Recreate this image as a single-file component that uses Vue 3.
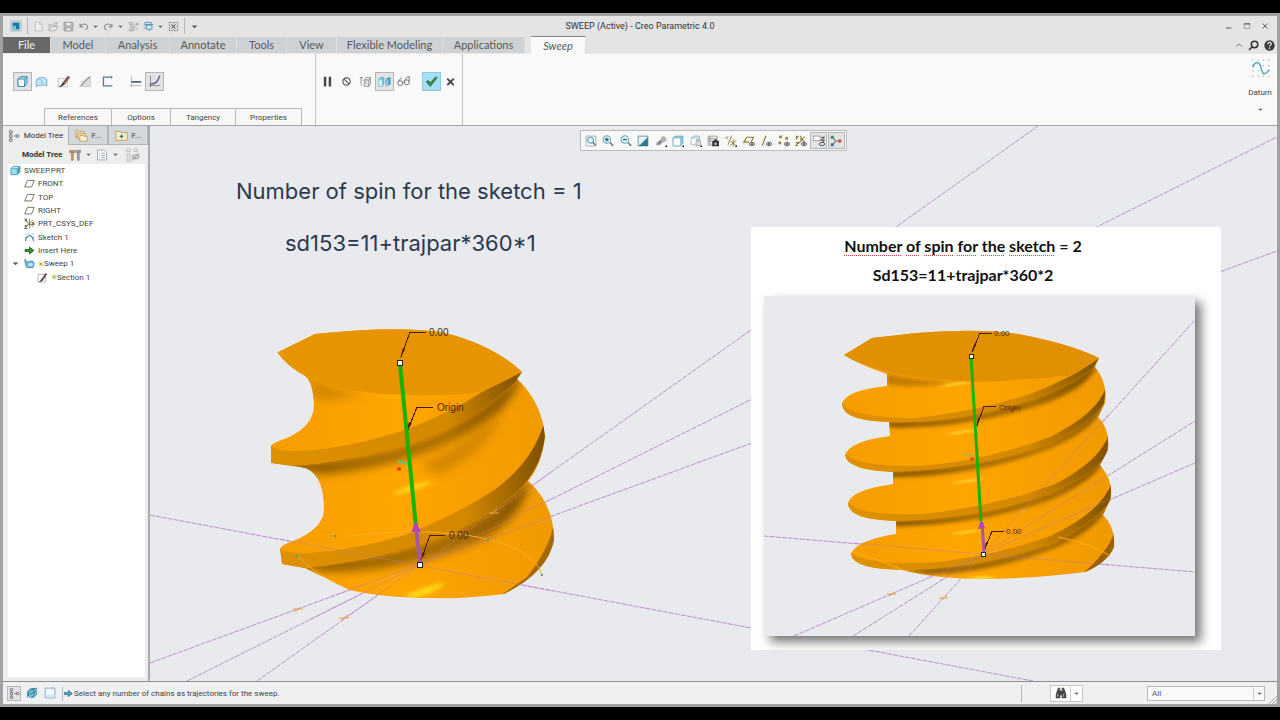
<script setup>
import { h } from 'vue'

const ink = '#5d6266'
const teal = '#2f7f9b'
const olive = '#8a7a35'

/* Each glyph is a list of [path, stroke, fill, strokeWidth] on a 16x16 grid. */
const glyphs = {
  app: [['M1.5 1.5h13v13h-13z', '#7fa6ba', '#d9e7ee'], ['M4 4h8v8H4z', '#0f6d95', '#1c7da6'], ['M4 8h4v4H4z', 'none', '#7cc4e2']],
  blank: [['M3.5 1.5h6l3.5 3.5v9.500h-9.500z', '#b5b5b5', '#efefef'], ['M9.500 1.500v3.500h3.500', '#b5b5b5', 'none']],
  open: [['M1.500 14V5h5l1 1.500H12V9', '#a5a5a5', '#d8d8d8'], ['M1.500 14l3-6h10l-3 6z', '#a5a5a5', '#e3e3e3'], ['M8 4c2-3 4-2 5 0M13 1v3.500h-3', '#a5a5a5', 'none']],
  save: [['M1.500 2h13v12.500h-13z', '#8f8f8f', '#bdbdbd'], ['M4 2h8v5H4z', '#999', '#eee'], ['M4.500 10h7v4.500h-7z', '#999', '#e8e8e8']],
  undo: [['M3 8c3-4.500 9-5 11 0 0 3-1.500 4-3 5M3 4v4.500h5', '#8c8c8c', 'none', 1.6]],
  redo: [['M13 8C10 3.500 4 3 2 8c0 3 1.500 4 3 5M13 4v4.500H8', '#8c8c8c', 'none', 1.6]],
  regen: [['M2 2h5v3H2zM4 7h6v3H4zM2 12h6v2.500H2z', '#a2a2a2', '#d6d6d6'], ['M10 5c3-4 5-1 4 1M15 3l-1 3-3-1M14 10c-1 3-3 3-4 1', '#999', 'none']],
  windows: [['M3 2h9v3H3zM5 6h8v6H5z', teal, '#d6edf7'], ['M1 6h3M1 10h3M12 5h3M9 12v3', teal, 'none']],
  closebox: [['M2 2h5l1 2 1-2h5v5l-2 1 2 1v5H9l-1-2-1 2H2V9l2-1-2-1z', '#777', '#eee'], ['M5 5l6 6M11 5l-6 6', '#555', 'none', 1.5]],
  down: [['M3 6h10l-5 5z', 'none', '#555']],
  min: [['M2 12h11', '#555', 'none', 2]],
  max: [['M2.500 3h11v10h-11z', '#666', 'none'], ['M2 4h12', '#555', 'none', 2]],
  close: [['M3 3l10 10M13 3L3 13', '#555', 'none', 1.8]],
  up: [['M2 11l6-5 6 5', '#888', 'none', 2]],
  search: [['M9.500 1.800a4.700 4.700 0 1 1 0 9.400 4.700 4.700 0 0 1 0-9.400zM6 10l-4.500 4.500', '#333', 'none', 2.2]],
  help: [['M8 .5a7.500 7.500 0 1 1 0 15 7.500 7.500 0 0 1 0-15z', 'none', '#3b3b3b'], ['M5.500 6c0-3.500 5.500-3 5 0-.3 1.500-2.500 1.500-2.500 3.500M8 11v2', '#fff', 'none', 1.7]],
  solid: [['M2.500 5l3-3h8v8.500l-3 3.500h-8z', teal, '#9ed7ef'], ['M2.500 5h8v9h-8z', teal, '#fff'], ['M10.500 5l3-3', teal, 'none']],
  surface: [['M1.500 6c4-4 9-4 13-1v8.500c-4-2-9-1-13 .5z', '#6aa6bd', '#bfe4f3'], ['M1.500 6c4-2 6-1 7 1M8.500 7v5', '#8abdd0', 'none']],
  sketch: [['M1.500 4.500h11v10h-11z', '#b5b5b5', '#fff'], ['M7 10l6.500-8.500 2 1.500L9 11.500z', '#6b3c36', '#9a6560'], ['M7 10l2 1.500-4 2.500H3l2-1z', '#222', '#333', .6]],
  thin: [['M3 14V9l8-6h3v11z', '#c2c2c2', '#ddd'], ['M1.500 14L14 1.500', '#6f6f6f', 'none', 1.2]],
  shell: [['M14 2.500H3v11h11', '#4c7e92', 'none', 1.6], ['M13 1.500v3', '#4c7e92', 'none']],
  constant: [['M3 1v14M1 13h14', '#aaa', 'none'], ['M3 8.500h12', '#234d60', 'none', 1.8]],
  variable: [['M3 1v14M1 13h14', '#7b7b86', 'none'], ['M3 11c6 0 9-2 11.500-10', '#76549c', 'none', 1.8]],
  pause: [['M3.500 2h3v12h-3zM9.500 2h3v12h-3z', 'none', '#444']],
  none: [['M8 3.500a4.500 4.500 0 1 1 0 9 4.500 4.500 0 0 1 0-9zM5 5l6 6', '#555', 'none', 1.4]],
  wire: [['M1 3h4M2.500 3v9M7 6l2-3h5v8l-2 3H7zM7 6h5v8M12 6l2-3', '#888', 'none', 1.1], ['M4 14L14 3M4 6l9 7', '#aaa', 'none']],
  preview: [['M1 6l2-3h4v8l-2 3H1z', '#3b9dbc', '#6ccae8', .7], ['M1 6h4v8H1z', '#8cc', '#e7f8ff', .7], ['M9 5l6-2v8l-5 3z', '#3583a8', '#4aaad0', .7], ['M9 5l2 1v8', '#fff', 'none']],
  glasses: [['M4 7a3 3 0 1 1 0 6 3 3 0 0 1 0-6zM12 6a3 3 0 1 1 0 6 3 3 0 0 1 0-6zM1.500 8l4-5M9 7l4-5h2v6M7 9h2', '#666', 'none', 1.1]],
  check: [['M1.500 8.500L4 6.500l2.500 3L13.500 2 15 3.500 6.500 14z', '#2a6f35', '#3e8c46']],
  cross: [['M4 4.500l8 8M12 4.500l-8 8', '#444', 'none', 2.4]],
  datum: [['M1 1h1M6 1h1M10 1h1M14.500 1h1M1 5.500h1M10 5.500h1M14.500 5.500h1M1 10h1M6 10h1M1 14.500h1M6 14.500h1M10 14.500h1M14.500 14.500h1', '#888', 'none', .7], ['M1.500 7C3 3 6.500 1 8 6s2 10 7.500 3', '#3e9dbf', 'none', 1.1]],
  tree: [['M2 1h3.500v3H2zM2 6.500h3.500v3H2zM2 12h3.500v3H2zM11 6.500h3.500v3H11z', ink, '#fff', 1.1], ['M8 8h3M3.700 4v2.500M3.700 9.500V12', ink, 'none', 1.1]],
  folders: [['M1 2h4l1 1h5v7H1z', '#bd9854', '#f5dfb0'], ['M3 5h4l1 1h5v6H3z', '#bd9854', '#f5dfb0'], ['M6 8h4l1 1h4v6H6z', '#bd9854', '#fdf2d7']],
  favfolder: [['M1 3h6l1 1.500h7V14H1z', '#bd9854', '#f9edca'], ['M8 6l1 2.200 2 .3-2 1.200-1 2.300-1-2.300-2-1.200 2-.3z', 'none', '#166b6e']],
  tools: [['M1 2h7v3H1z', '#9a7a55', '#b99a70'], ['M3.500 5h2v10h-2z', '#a07b4e', '#d6a15d'], ['M10 1v4l1.500 1v9h2V6L15 5V1M10 4h5', '#777', '#aaa']],
  list: [['M2 1.500h9l3 3v10H2z', '#8c979d', '#fff'], ['M4 5.500h1M7 5.500h5M4 8.500h1M7 8.500h5M4 11.500h1M7 11.500h5', '#7b8a91', 'none']],
  hidetree: [['M1 1h4v3H1zM1 6.500h4v3H1zM1 12h4v3H1zM9 1h4v3H9z', '#bbb', '#eee'], ['M7 10c2-3 6-3 8 0-2 3-6 3-8 0zM7 14l8-8M11 9v2', '#999', 'none', 1.2]],
  part: [['M1.500 5l4-3h9v8l-4 4h-9z', '#327f98', '#45a8c6'], ['M1.500 5h9v9h-9z', '#54a2b8', '#9bdced'], ['M1.500 5l4-3h9l-4 3z', '#54a2b8', '#c8f1fa']],
  plane: [['M5 3.500h10l-4 9.500H1z', '#80735f', '#fff', 1.4]],
  csys: [['M8 1v14M2 4l12 9M3 13L13 3M5 9h10', '#8a7540', 'none', 1.2], ['M1 1l3 4M4 1L2 5M12 6l3 4M15 6l-3 4M1 11h3l-3 4h4', '#3e3830', 'none', 1.3]],
  arc: [['M2 13C4 3 12 3 14 13', '#287b9d', 'none', 1.7], ['M1 3h3M6 3h3M12 3h3M1 8h2M13 8h2', '#79a7b8', 'none']],
  insert: [['M1.500 6.500H8V3l6.500 5L8 13V9.500H1.500z', '#173e14', '#299a25']],
  sweep: [['M1 2l2 1v3l5-1 4-1 3 4-2 6H4L2 9z', '#32829f', '#70c2df'], ['M5 7l7-1 2 3-2 4H6z', '#4795b1', '#b8eafa']],
  section: [['M1.500 3.500h11v11h-11z', '#999', '#fff'], ['M7 10l5.500-8 2 1L9 11z', '#5b3834', '#7b4a43', .8], ['M7 10l2 1.500-4 2.500H3.500l1.500-1z', '#222', '#333', .6]],
  spark: [['M8 1v14M1 8h14M3 3l10 10M13 3L3 13', '#a6b51e', 'none', 1.8]],
  refit: [['M1.500 1.500h13v13h-13z', '#8b9aa2', '#fff'], ['M7.500 3a4 4 0 1 1 0 8 4 4 0 0 1 0-8z', '#5aa0b5', '#e1f3f7', 1.4], ['M10.500 10l4 4', '#6f7678', 'none', 2]],
  zoomin: [['M6.500 1a5 5 0 1 1 0 10 5 5 0 0 1 0-10z', '#65a6b9', '#e5f4f8', 1.4], ['M6.500 3.500v5M4 6h5', '#20637a', 'none', 1.8], ['M10.500 10l4.500 4.500', '#6f7678', 'none', 2]],
  zoomout: [['M6.500 1a5 5 0 1 1 0 10 5 5 0 0 1 0-10z', '#65a6b9', '#e5f4f8', 1.4], ['M4 6h5', '#20637a', 'none', 1.8], ['M10.500 10l4.500 4.500', '#6f7678', 'none', 2]],
  repaint: [['M1.500 1.500h13v13h-13z', '#407c91', '#e5f6fb'], ['M14.500 3v11.500H2z', 'none', '#2b7891'], ['M3 13L12 4', '#d9e4e7', 'none', 2]],
  render: [['M2 13c0-6 5-3 6-7s4-5 6-2-1 5-3 5-2 5-9 4z', '#999', '#b4b4b4'], ['M4 12c2 0 2-3 4-4', '#6e6e6e', 'none', 2], ['M16 13v3h-3z', 'none', '#222']],
  style: [['M1.500 4l3-2.500h10V11l-3 3.500h-10z', '#4c9ab2', '#8fd1e4'], ['M1.500 4h10v10.500h-10z', '#75b4c6', '#fff'], ['M16 13v3h-3z', 'none', '#222']],
  saved: [['M1.500 4l3-2.500h8V8', '#70a4b5', '#def4fa'], ['M1.500 4h8v9h-8z', '#86b5c4', '#fff'], ['M8 8h6v6H8zM9.500 8V6h3v2', '#a0a0a0', '#ddd'], ['M16 13v3h-3z', 'none', '#222']],
  camera: [['M1.500 1.500h12v12h-12zM4 2v11M1.500 5h12M1.500 8h12', '#888', '#eee'], ['M7 8h2l1-2h3l1 2h2v7H7z', 'none', '#333'], ['M11.500 9.500a2 2 0 1 1 0 4 2 2 0 0 1 0-4z', 'none', '#aaa']],
  datumall: [['M1 2l3 3M4 2L1 5M9 1L4 13M11 6v9M7 8l8 6M15 7l-8 7', olive, 'none', 1.2], ['M16 13v3h-3z', 'none', '#222']],
  datumplane: [['M5 3h9l-3 6M8 9.500H1L5 3', olive, 'none', 1.5], ['M8 12c2-3 6-3 8 0-2 3-6 3-8 0z', '#444', '#ddd', 1.2], ['M11 11h2v2h-2z', 'none', '#222']],
  datumaxis: [['M8 1L3 14', olive, 'none', 1.5], ['M8 12c2-3 6-3 8 0-2 3-6 3-8 0z', '#444', '#ddd', 1.2], ['M11 11h2v2h-2z', 'none', '#222']],
  datumpoint: [['M2 1l3 3M5 1L2 4M1 9l3 3M4 9l-3 3M10 3l3 3M13 3l-3 3', olive, 'none', 1.6], ['M8 12c2-3 6-3 8 0-2 3-6 3-8 0z', '#444', '#ddd', 1.2], ['M11 11h2v2h-2z', 'none', '#222']],
  datumcsys: [['M2 1v5M5 1l-3 4M7 2l6 8M13 2L4 12M8 1v8M1 10h3l-3 4h3', olive, 'none', 1.4], ['M8 12c2-3 6-3 8 0-2 3-6 3-8 0z', '#444', '#ddd', 1.2], ['M11 11h2v2h-2z', 'none', '#222']],
  note: [['M.500 1.500h9v6h-9z', '#888', '#fff'], ['M11 3h4l-4 4h4l-2 3', '#555', 'none', 1.4], ['M8 12c2-3 6-3 8 0-2 3-6 3-8 0z', '#444', '#ddd', 1.3]],
  spin: [['M3 3l5 5h5M8 8l-5 5', '#76807c', 'none', 1.5], ['M1 1h4v4H1z', 'none', '#438c4c'], ['M11 6h4v4h-4z', 'none', '#cb4941'], ['M1 11h4v4H1z', 'none', '#3b78ad']],
  browser: [['M8 2a6 6 0 1 1 0 12A6 6 0 0 1 8 2z', '#2f81a5', '#7cc3df'], ['M2 14c-2-4 7-14 12-12 2 3-7 8-11 8M8 2c4 4 4 8 0 12', '#296c8b', 'none', 1.2]],
  panel: [['M1.500 1.500h13v13h-13z', '#6795a8', '#eefaff'], ['M2 10h12v4H2z', 'none', '#d3e7ef']],
  arrow: [['M1 6h7V2.500L15 8l-7 5.500V10H1z', '#1d5168', '#49a4c6']],
  binoculars: [['M4 1h3v4h2V1h3l3 9v5H9v-4H7v4H1v-5z', 'none', '#444'], ['M3.500 9v4M11.500 9v4', '#aaa', 'none', 1.5], ['M5.500 2v3M10.500 2v3', '#888', 'none']],
}

const Icon = ({ name, size = 13 }) =>
  h('svg', { viewBox: '0 0 16 16', width: size, height: size, 'aria-hidden': 'true' },
    glyphs[name].map(([d, stroke, fill, w = 1]) => h('path', { d, stroke, fill, 'stroke-width': w })))
Icon.props = ['name', 'size']

const quick = [
  { n: 'blank', l: 'New' }, { n: 'open', l: 'Open' }, { n: 'save', l: 'Save' },
  { n: 'undo', l: 'Undo', more: true }, { n: 'redo', l: 'Redo', more: true },
  { n: 'regen', l: 'Regenerate' }, { n: 'windows', l: 'Windows', more: true }, { n: 'closebox', l: 'Close window' },
]
const tabs = [
  { t: 'File', c: 'file' }, { t: 'Model', c: 'w55' }, { t: 'Analysis', c: 'w64' }, { t: 'Annotate', c: 'w67' },
  { t: 'Tools', c: 'w50' }, { t: 'View', c: 'w50' }, { t: 'Flexible Modeling', c: 'w106' }, { t: 'Applications', c: 'w82' },
  { t: 'Sweep', c: 'current' },
]
const shapeTools = [
  { n: 'solid', on: true }, { n: 'surface' }, { n: 'sketch', c: 'gap-s' }, { n: 'thin', c: 'gap-s' },
  { n: 'shell', c: 'gap-s' }, { n: 'constant', c: 'gap-l' }, { n: 'variable', on: true },
]
const confirmTools = [
  { n: 'pause' }, { n: 'none' }, { n: 'wire' }, { n: 'preview', on: true }, { n: 'glasses' },
  { n: 'check', c: 'accept gap-l' }, { n: 'cross' },
]
const panels = [{ t: 'References', c: 'w68' }, { t: 'Options', c: 'w59' }, { t: 'Tangency', c: 'w65' }, { t: 'Properties', c: 'w66' }]
const treeItems = [
  { n: 'part', t: 'SWEEP.PRT', c: 'root' }, { n: 'plane', t: 'FRONT' }, { n: 'plane', t: 'TOP' }, { n: 'plane', t: 'RIGHT' },
  { n: 'csys', t: 'PRT_CSYS_DEF' }, { n: 'arc', t: 'Sketch 1' }, { n: 'insert', t: 'Insert Here' },
  { n: 'sweep', t: 'Sweep 1', spark: true, open: true }, { n: 'section', t: 'Section 1', spark: true, c: 'deep' },
]
const viewTools = ['refit', 'zoomin', 'zoomout', 'repaint', 'render', 'style', 'saved', 'camera', 'datumall', 'datumplane', 'datumaxis', 'datumpoint', 'datumcsys', 'note', 'spin']

/* Single-turn sweep */
const bodyA = 'M277.500 352.500L315 334Q400 325 445 333Q493 345 522 372L517 379Q542 402 545 437Q542 464 528 481Q554 504 554 540Q548 572 504 594Q465 599 433 598Q385 598 350 590Q325 578 305 568L282 564L280 549Q281 545 293 541Q323 529 324 510Q324 470 300 467L271 463L271 446Q272 443 287 438Q314 426 314 405Q313 382 305 376Q288 367 277.500 352.500Z'
const faceA = 'M277.500 352.500L315 334Q400 325 445 333Q493 345 522 372Q502 382 481 392Q450 396 405 395Q350 393 318 382Q290 370 277.500 352.500Z'
const edgesA = [
  'M271 446Q275 451 300 451Q345 449 405 430Q450 413 482 392L522 372L517 380Q492 404 452 426Q400 452 317 464Q288 467 271 463Z',
  'M280 548Q285 554 310 553Q355 550 405 535Q460 513 497 488Q534 460 545 420V437Q542 462 527 481Q500 511 450 533Q385 560 307 568Q289 568 282 564Z',
]
const shadesA = [
  'M271 463Q385 463 452 426Q494 402 522 372Q514 408 470 432Q405 467 325 474Q300 472 271 463Z',
  'M282 564Q385 561 450 533Q500 511 530 478Q525 515 485 538Q420 568 350 571Q320 573 282 564Z',
]
const shadesSoftA = [
  'M308 376Q330 390 365 395Q340 400 312 399Z',
  'M420 466Q470 440 500 415Q490 450 440 474Z',
]

/* Double-turn sweep */
const bodyB = 'M844 355L872 338Q970 325 1023 335Q1070 344 1099 358L1095 367Q1108 383 1105 403L1098 417Q1110 428 1108 450L1100 465Q1113 480 1111 498L1103 515Q1116 528 1114 547Q1107 563 1085 572Q1030 579 980 579Q930 578 903 570Q854 569 851 555Q853 541 896 534V521Q850 520 848 504Q850 490 893 484V472Q847 470 845 455Q850 441 890 436L889 422Q843 421 842 404Q846 390 887 386V374Q862 366 844 355Z'
const faceB = 'M844 355L872 338Q970 325 1023 335Q1070 344 1099 358L1073 375Q1000 383 957 381Q875 375 844 355Z'
const edgesB = [
  'M842 402Q850 418 915 418Q975 412 1030 394Q1074 377 1099 358L1093 368Q1060 391 1023 402Q955 424 888 422Q846 420 842 410Z',
  'M845 453Q856 467 920 466Q985 461 1050 437Q1098 413 1106 387L1104 403Q1090 424 1050 443Q985 468 892 472Q850 470 845 461Z',
  'M848 502Q858 516 920 514Q990 508 1055 484Q1100 461 1109 434L1107 454Q1096 472 1050 493Q980 519 896 521Q852 519 848 510Z',
  'M851 552Q861 564 925 563Q985 559 1050 536Q1102 512 1112 482L1110 501Q1099 519 1052 543Q980 569 903 570Q855 569 852 559Z',
]
const shadesB = [
  'M888 422Q955 424 1023 402Q1060 391 1097 364Q1090 388 1040 405Q965 429 889 427Z',
  'M890 472Q985 468 1050 443Q1090 424 1105 400Q1100 427 1048 449Q975 477 891 477Z',
  'M894 521Q980 519 1050 493Q1096 472 1108 450Q1103 477 1050 500Q980 525 895 526Z',
  'M900 570Q980 569 1052 543Q1099 519 1111 498Q1102 529 1050 550Q990 573 930 574Z',
]
const glowsB = [[956, 384], [962, 432], [968, 481], [967, 532]]
</script>

<template>
  <div class="desktop">
    <main class="window">
      <header class="titlebar">
        <div class="quick">
          <Icon name="app" :size="12" /><i class="rule"></i>
          <button v-for="q in quick" :key="q.n" :aria-label="q.l" :class="{ more: q.more }">
            <Icon :name="q.n" :size="11" /><Icon v-if="q.more" name="down" :size="7" />
          </button>
          <i class="rule"></i>
          <button aria-label="Customize"><Icon name="down" :size="9" /></button>
        </div>
        <h1>SWEEP (Active) - Creo Parametric 4.0</h1>
        <div class="winctl">
          <button aria-label="Minimize"><Icon name="min" :size="8" /></button>
          <button aria-label="Maximize"><Icon name="max" :size="8" /></button>
          <button aria-label="Close"><Icon name="close" :size="8" /></button>
        </div>
      </header>

      <nav class="tabs">
        <button v-for="t in tabs" :key="t.t" :class="t.c">{{ t.t }}</button>
        <div class="helpers">
          <button aria-label="Collapse"><Icon name="up" :size="8" /></button>
          <button aria-label="Search"><Icon name="search" :size="11" /></button>
          <button aria-label="Help"><Icon name="help" :size="11" /></button>
        </div>
      </nav>

      <section class="ribbon">
        <div class="group shape">
          <div class="tools">
            <button v-for="s in shapeTools" :key="s.n" :aria-label="s.n" :class="[s.c, { on: s.on }]"><Icon :name="s.n" /></button>
          </div>
          <div class="panels"><button v-for="p in panels" :key="p.t" :class="p.c">{{ p.t }}</button></div>
        </div>
        <div class="group confirm">
          <div class="tools">
            <button v-for="s in confirmTools" :key="s.n" :aria-label="s.n" :class="[s.c, { on: s.on }]"><Icon :name="s.n" /></button>
          </div>
        </div>
        <button class="datum"><Icon name="datum" :size="19" /><span>Datum</span><Icon name="down" :size="7" /></button>
      </section>

      <div class="work">
        <aside class="side">
          <div class="sidetabs">
            <button class="active"><Icon name="tree" :size="12" />Model Tree</button>
            <button><Icon name="folders" />F...</button>
            <button><Icon name="favfolder" />F...</button>
          </div>
          <div class="sidehead">
            <strong>Model Tree</strong>
            <button aria-label="Settings"><Icon name="tools" :size="12" /></button><Icon name="down" :size="7" />
            <button aria-label="Show"><Icon name="list" :size="12" /></button><Icon name="down" :size="7" />
            <button class="last" aria-label="Hide tree"><Icon name="hidetree" :size="14" /></button>
          </div>
          <div class="treebox">
            <ul class="tree">
              <li v-for="i in treeItems" :key="i.t" :class="i.c">
                <span class="twist"><Icon v-if="i.open" name="down" :size="9" /></span>
                <Icon :name="i.n" :size="11" />
                <span class="label"><Icon v-if="i.spark" name="spark" :size="6" />{{ i.t }}</span>
              </li>
            </ul>
          </div>
        </aside>

        <section class="viewport">
          <svg class="scene" viewBox="150 126 1127 555" preserveAspectRatio="xMidYMid slice" role="img" aria-label="Sweep with one turn">
            <defs>
              <linearGradient id="bodyFill" x1="0" x2="1"><stop offset="0" stop-color="#f59d00" /><stop offset=".45" stop-color="#ffa500" /><stop offset="1" stop-color="#f09900" /></linearGradient>
              <linearGradient id="edgeFill" x1="0" x2="1"><stop offset="0" stop-color="#de9000" /><stop offset=".7" stop-color="#d38800" /><stop offset="1" stop-color="#7d5000" /></linearGradient>
              <linearGradient id="shadeFill" x1="0" x2="1"><stop offset="0" stop-color="#744a00" /><stop offset=".35" stop-color="#9c6500" /><stop offset=".7" stop-color="#a46a00" /><stop offset="1" stop-color="#7b4f00" /></linearGradient>
              <filter id="soft" x="-20%" y="-30%" width="140%" height="160%"><feGaussianBlur stdDeviation="5" /></filter>
              <filter id="fine" x="-20%" y="-30%" width="140%" height="160%"><feGaussianBlur stdDeviation="2" /></filter>
              <filter id="glow" x="-30%" y="-200%" width="160%" height="500%"><feGaussianBlur stdDeviation="3 1" /></filter>
              <clipPath id="clipA"><path :d="bodyA" /></clipPath>
            </defs>
            <path class="axis" d="M150 515L1033 681M150 663L1277 251M187 681L1277 137M257 681L1038 126" />
            <path :d="bodyA" fill="url(#bodyFill)" />
            <g clip-path="url(#clipA)">
              <path v-for="d in shadesA" :key="d" :d="d" fill="url(#shadeFill)" filter="url(#soft)" />
              <path v-for="d in shadesSoftA" :key="d" :d="d" fill="#c47c00" opacity=".7" filter="url(#soft)" />
              <path v-for="d in edgesA" :key="d" :d="d" fill="url(#edgeFill)" />
              <path d="M554 522Q550 548 527 577L500 596L530 592L560 560Z" fill="#a36800" />
              <path d="M390 495Q412 483 434 481Q418 491 390 495Z" fill="#ffe31c" filter="url(#fine)" />
              <path d="M404 596Q430 585 446 583Q434 593 412 598Z" fill="#ffe31c" filter="url(#fine)" />
              <path d="M376 397Q388 395 405 396Q390 399 376 397Z" fill="#ffc414" filter="url(#fine)" />
            </g>
            <path :d="faceA" fill="#e69500" />
            <path class="axis faint" d="M280 539L553 591M330 597L553 516M309 620L553 498M342 620L553 471" />
            <path class="curve" d="M297 555Q308 570 350 590M340 537Q400 528 460 534Q535 545 542 575" />
            <path class="star" d="M293 609h10M295 612l6-5M339 618h10M341 620l7-5M489 513h10M491 514l6-5M536 520l8 2" />
            <path class="leader" d="M401 357L410 332H426M407 432L417 407H433M421 560L430 535H445" />
            <path class="tip" d="M400 359l5-10-2-1zM406 433l6-10-3-1zM420 562l5-9-2-1z" />
            <g class="mark"><text x="429" y="336">0.00</text><text x="437" y="411">Origin</text><text x="449" y="539">0.00</text></g>
            <path d="M400 364L416 527" stroke="#15b400" stroke-width="4" />
            <path d="M416 526L420 563" stroke="#a45a9f" stroke-width="4" /><path d="M411.500 532L415.500 521L421 532Z" fill="#b641c4" />
            <path d="M407 464L398 461" stroke="#58c78a" stroke-width="2" /><circle cx="399" cy="469" r="2" fill="#ef3a10" />
            <path d="M334 535h2v2h-2zM296 555h2v2h-2zM487 539h2v2h-2zM541 574h2v2h-2z" fill="#4fa36b" />
            <path class="handle" d="M397 360h5v5h-5zM417 562h5v5h-5z" />
          </svg>

          <div class="viewtools">
            <button v-for="(v, n) in viewTools" :key="v" :aria-label="v" :class="{ on: n > 12 }"><Icon :name="v" :size="12" /></button>
          </div>

          <div class="overlay">
            <div class="caption"><p>Number of spin for the sketch = 1</p><p>sd153=11+trajpar*360*1</p></div>
            <figure class="card">
              <figcaption>
                <p><u>Number</u> <u>of</u> <u>spin</u> <u>for</u> <u>the</u> <u>sketch</u> = 2</p>
                <p>Sd153=11+trajpar*360*2</p>
              </figcaption>
              <svg viewBox="764 296 431 340" role="img" aria-label="Sweep with two turns">
                <defs><clipPath id="clipB"><path :d="bodyB" /></clipPath></defs>
                <path class="axis" d="M764 536L1195 572M794 636L1195 463M853 636L1195 421M909 636L1195 320" />
                <path :d="bodyB" fill="url(#bodyFill)" />
                <g clip-path="url(#clipB)">
                  <path v-for="d in shadesB" :key="d" :d="d" fill="url(#shadeFill)" filter="url(#fine)" />
                  <path d="M886 373Q910 380 957 382Q920 388 888 385Z" fill="#c37c00" filter="url(#fine)" />
                  <path v-for="d in edgesB" :key="d" :d="d" fill="url(#edgeFill)" />
                  <path d="M1114 532Q1110 550 1080 576L1114 570Z" fill="#986200" />
                  <ellipse v-for="g in glowsB" :key="g[1]" :cx="g[0]" :cy="g[1]" rx="15" ry="1" :transform="`rotate(-8 ${g[0]} ${g[1]})`" fill="#ffe040" filter="url(#glow)" />
                  <ellipse cx="982" cy="578" rx="13" ry="2" fill="#ffd832" filter="url(#glow)" />
                </g>
                <path :d="faceB" fill="#e09000" />
                <path class="axis faint" d="M853 543L1110 565M930 577L1110 499M940 581L1105 477M965 574L1108 415" />
                <path class="curve" d="M854 552Q880 560 903 570M1058 537Q1095 545 1110 556" />
                <path class="star" d="M887 594h9M889 596l6-4M939 598h9M941 600l6-5M1019 511h8M1020 513l5-4" />
                <path class="leader" d="M972 352L980 333H992M977 426L984 406H996M985 549L992 531H1004" />
                <path class="tip" d="M972 353l4-8-2-1zM976 427l4-8-2-1zM984 551l4-8-2-1z" />
                <g class="mark small"><text x="994" y="336">0.00</text><text x="999" y="410">Origin</text><text x="1006" y="534">0.00</text></g>
                <path d="M971 357L981 521" stroke="#15b400" stroke-width="3" /><path d="M982 522L984 552" stroke="#a45a9f" stroke-width="3" />
                <path d="M978 529L981 520L985 528Z" fill="#b641c4" />
                <path d="M974 456L964 454" stroke="#7dbf83" stroke-width="1" /><circle cx="972" cy="459" r="2" fill="#ef4a18" />
                <path class="handle" d="M969 354h4v4h-4zM981 552h4v4h-4z" />
              </svg>
            </figure>
          </div>
        </section>
      </div>

      <footer class="status">
        <button class="on" aria-label="Toggle tree"><Icon name="tree" :size="11" /></button>
        <button aria-label="Toggle browser"><Icon name="browser" :size="12" /></button>
        <button aria-label="Full screen"><Icon name="panel" :size="12" /></button>
        <p><Icon name="arrow" :size="9" />Select any number of chains as trajectories for the sweep.</p>
        <i class="rule"></i>
        <div class="find">
          <button aria-label="Find"><Icon name="binoculars" :size="12" /></button>
          <button aria-label="Find options"><Icon name="down" :size="7" /></button>
        </div>
        <div class="filter">
          <select aria-label="Selection filter"><option>All</option></select>
          <span><Icon name="down" :size="7" /></span>
        </div>
        <svg class="grip" viewBox="0 0 8 8" width="8" height="8"><path d="M0 8L8 0M3 8l5-5M6 8l2-2" stroke="#aaa" /></svg>
      </footer>
    </main>
  </div>
</template>

<style>
body { background: #000; }
</style>

<style scoped>
* { box-sizing: border-box; }
.desktop { display: flex; flex-direction: column; min-height: 100vh; padding: 13px 0; background: #000; font-family: Roboto, "Noto Sans", sans-serif; font-size: 8px; color: #444; }
.window { flex: 1; display: flex; flex-direction: column; border: 3px solid #a1a1a1; background: #e4e4e4; }
button { display: flex; align-items: center; justify-content: center; margin: 0; padding: 0; border: 0; background: none; color: inherit; font: inherit; }
svg { display: block; flex: none; fill: none; }
p, h1, ul, figure { margin: 0; padding: 0; }
.rule { align-self: stretch; width: 1px; background: #b5b5b5; }

.titlebar { display: grid; grid-template-columns: 1fr auto 1fr; align-items: center; height: 20px; }
.titlebar h1 { font-size: 9px; line-height: 12px; font-weight: 400; color: #333; }
.quick { display: flex; align-items: center; gap: 4px; height: 16px; padding-left: 7px; }
.quick button { gap: 3px; }
.quick > .rule { margin: 0 1px; }
.winctl { display: flex; justify-content: flex-end; gap: 10px; padding-right: 8px; }

.tabs { display: flex; height: 18px; padding-top: 1px; border-bottom: 1px solid #e9e9e9; font-family: Lato, "Noto Sans", sans-serif; font-size: 11px; line-height: 14px; color: #55595c; }
.tabs > button { border-right: 1px solid #dcdedf; background: #cfd2d4; white-space: nowrap; }
.tabs > .file { width: 48px; background: #686868; color: #f2f2f2; }
.w50 { width: 50px; } .w55 { width: 55px; } .w64 { width: 64px; } .w67 { width: 67px; } .w106 { width: 106px; } .w82 { width: 82px; }
.w68 { width: 68px; } .w59 { width: 59px; } .w65 { width: 65px; } .w66 { width: 66px; }
.tabs > .current { width: 55px; margin: -1px 0 -1px 6px; border-top: 1px solid #888; background: #f9f9f9; font-style: italic; }
.helpers { display: flex; align-items: center; gap: 5px; margin-left: auto; padding-right: 2px; }

.ribbon { display: flex; height: 72px; border-bottom: 1px solid #a5a5a5; background: #f9f9f9; }
.group { display: flex; flex-direction: column; justify-content: space-between; border-right: 1px solid #c2c2c2; }
.shape { width: 313px; }
.confirm { width: 147px; }
.tools { display: flex; padding: 18px 0 0 10px; }
.confirm .tools { padding-left: 2px; }
.tools button { width: 19px; height: 19px; border: 1px solid transparent; }
.tools .on, .viewtools .on, .status .on { border-color: #b4b6b8; background: #e2e3e5; }
.tools .gap-s { margin-left: 3px; }
.tools .gap-l { margin-left: 9px; }
.tools .accept { border-color: #8fc7df; background: #a4dff7; }
.panels { display: flex; height: 17px; padding-left: 41px; }
.panels button { border: 1px solid #b9b9b9; border-width: 1px 1px 0 0; background: #f7f7f7; }
.panels button:first-child { border-left-width: 1px; }
.datum { flex-direction: column; justify-content: space-between; width: 34px; margin-left: auto; padding: 5px 0 12px; }

.work { flex: 1; display: flex; }
.side { display: flex; flex-direction: column; width: 147px; border-right: 2px solid #a9abad; background: #eceded; }
.sidetabs { display: flex; height: 19px; }
.sidetabs button { flex: 1; gap: 4px; border: 1px solid #b4b7b9; border-top: 0; background: #d5d8da; }
.sidetabs .active { flex: none; width: 65px; border: 0; background: #eceded; color: #333; }
.sidehead { display: flex; align-items: center; gap: 4px; height: 19px; padding-left: 19px; }
.sidehead strong { margin-right: 3px; color: #333; }
.sidehead .last { margin-left: 3px; }
.treebox { flex: 1; margin: 0 3px 4px 5px; background: #fff; }
.tree { display: grid; grid-auto-rows: 1fr; height: 120px; list-style: none; }
.tree li { display: flex; align-items: center; gap: 3px; }
.tree .twist { width: 10px; }
.tree .root .twist { display: none; }
.tree .root { padding-left: 2px; }
.tree li:not(.root) { padding-left: 3px; }
.tree li.deep { padding-left: 16px; }
.label { display: flex; align-items: center; white-space: nowrap; }

.viewport { position: relative; flex: 1; display: flex; flex-direction: column; align-items: stretch; background: #e8eaed; }
.scene { position: absolute; inset: 0; width: 100%; height: 100%; }
.axis { stroke: #b877c8; stroke-width: 1; stroke-dasharray: 5 1; }
.scene > .axis:not(.faint), .card .axis:not(.faint) { opacity: .8; }
.faint { opacity: .45; }
.curve { stroke: #ffad21; stroke-width: 1; }
.star { stroke: #e8a544; stroke-width: 1; }
.leader { stroke: #4a1c08; stroke-width: 1; shape-rendering: crispEdges; }
.tip { fill: #4a1c08; }
.handle { fill: #fff; stroke: #222; stroke-width: 1; shape-rendering: crispEdges; }
.mark { fill: #54270c; font-family: "Liberation Sans", sans-serif; font-size: 10px; }
.small { font-size: 8px; }
.viewtools { position: relative; display: flex; justify-content: space-between; align-self: center; width: 267px; height: 21px; margin-top: 4px; padding: 1px; border: 1px solid #b9bbbd; background: #f8f8f8; }
.viewtools button { width: 17px; border: 1px solid transparent; }
.overlay { position: relative; display: flex; justify-content: space-between; padding: 0 56px 0 86px; }
.caption { padding-top: 26px; font-family: Inter, sans-serif; font-size: 22px; line-height: 28px; color: #2b3a4e; }
.caption p + p { margin: 24px 0 0 49px; }
.card { width: 470px; margin-top: 76px; padding: 4px 26px 14px 13px; background: #fff; }
.card figcaption { padding: 0 33px 7px 0; font-family: Lato, sans-serif; font-size: 16px; font-weight: 700; line-height: 29px; text-align: center; color: #111; }
.card u { text-decoration: underline dotted #c44 1px; text-underline-offset: 3px; }
.card svg { width: 100%; height: auto; background: #e8eaed; box-shadow: 6px 6px 10px #777; }

.status { display: flex; align-items: center; gap: 4px; height: 23px; padding-left: 4px; border-top: 1px solid #8c8f91; background: #eff0f1; }
.status > button { width: 14px; height: 15px; border: 1px solid transparent; }
.status p { display: flex; align-items: center; flex: 1; gap: 1px; height: 15px; margin-left: 1px; padding-left: 1px; border-left: 1px solid #bbb; }
.status > .rule { height: 17px; align-self: center; }
.find { display: flex; height: 17px; margin: 0 60px 0 24px; padding: 0 1px; border: 1px solid #c6c8ca; background: #fff; }
.find button { width: 18px; }
.find button + button { width: 11px; border-left: 1px solid #ccc; }
.filter { display: flex; width: 118px; height: 15px; border: 1px solid #b6babd; background: #f9f9f9; }
.filter select { flex: 1; padding: 0 4px; border: 0; appearance: none; background: none; color: #555; font: inherit; }
.filter span { display: grid; place-items: center; width: 11px; border-left: 1px solid #ccc; }
.grip { align-self: flex-end; }
</style>
